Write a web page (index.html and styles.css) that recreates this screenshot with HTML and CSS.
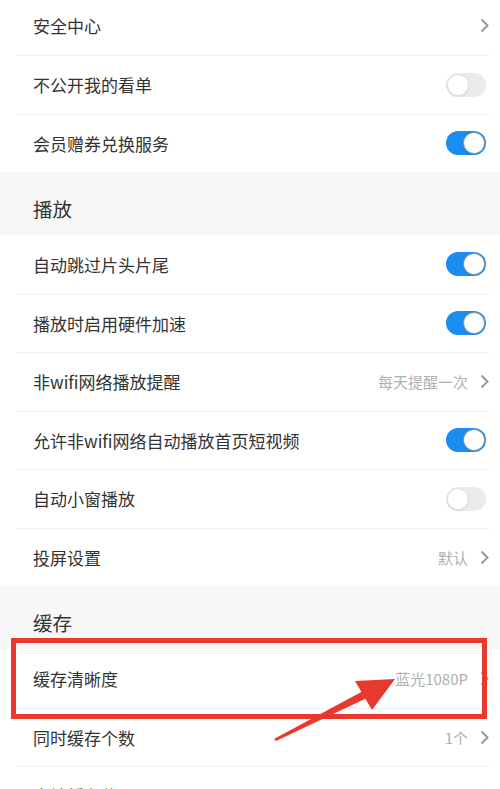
FILE: index.html
```html
<!DOCTYPE html>
<html lang="zh-CN">

<head>
    <meta charset="UTF-8">
    <meta name="viewport" content="width=device-width, initial-scale=1.0">
    <title>设置</title>
    <link rel="stylesheet" href="styles.css">
</head>

<body>
    <div class="page">
        <div class="group">
            <div class="row">
                <span class="label">安全中心</span>
                <span class="extra"><svg class="chev" viewBox="0 0 9 15"><polyline points="1.5,1.5 7.5,7.5 1.5,13.5"/></svg></span>
            </div>
            <div class="row">
                <span class="label">不公开我的看单</span>
                <span class="switch"></span>
            </div>
            <div class="row">
                <span class="label">会员赠券兑换服务</span>
                <span class="switch on"></span>
            </div>
        </div>

        <div class="section-title">播放</div>
        <div class="group">
            <div class="row">
                <span class="label">自动跳过片头片尾</span>
                <span class="switch on"></span>
            </div>
            <div class="row">
                <span class="label">播放时启用硬件加速</span>
                <span class="switch on"></span>
            </div>
            <div class="row">
                <span class="label">非wifi网络播放提醒</span>
                <span class="extra"><span class="value">每天提醒一次</span><svg class="chev" viewBox="0 0 9 15"><polyline points="1.5,1.5 7.5,7.5 1.5,13.5"/></svg></span>
            </div>
            <div class="row">
                <span class="label">允许非wifi网络自动播放首页短视频</span>
                <span class="switch on"></span>
            </div>
            <div class="row">
                <span class="label">自动小窗播放</span>
                <span class="switch"></span>
            </div>
            <div class="row">
                <span class="label">投屏设置</span>
                <span class="extra"><span class="value">默认</span><svg class="chev" viewBox="0 0 9 15"><polyline points="1.5,1.5 7.5,7.5 1.5,13.5"/></svg></span>
            </div>
        </div>

        <div class="section-title">缓存</div>
        <div class="group">
            <div class="row">
                <span class="label">缓存清晰度</span>
                <span class="extra"><span class="value">蓝光1080P</span><svg class="chev" viewBox="0 0 9 15"><polyline points="1.5,1.5 7.5,7.5 1.5,13.5"/></svg></span>
            </div>
            <div class="row">
                <span class="label">同时缓存个数</span>
                <span class="extra"><span class="value">1个</span><svg class="chev" viewBox="0 0 9 15"><polyline points="1.5,1.5 7.5,7.5 1.5,13.5"/></svg></span>
            </div>
            <div class="row">
                <span class="label">本地缓存位置</span>
                <span class="extra"><svg class="chev" viewBox="0 0 9 15"><polyline points="1.5,1.5 7.5,7.5 1.5,13.5"/></svg></span>
            </div>
        </div>
    </div>

    <!-- annotation drawn over the screenshot -->
    <div class="mark"></div>
    <svg class="arrow" viewBox="0 0 500 789">
        <polygon points="274,739 362.2,691.4 365.8,698.6 276,741"/>
        <polygon points="355,681 395,679 372,710"/>
    </svg>
</body>

</html>
```

FILE: styles.css
```css
body {
    margin: 0;
    background: #fff;
    font-family: "Noto Sans CJK SC", "Noto Sans", sans-serif;
    color: #333;
    overflow: hidden;
    height: 789px;
    position: relative;
}

.page {
    margin-top: -3.5px;
}

.group {
    background: #fff;
    padding: 0 11px 0 16px;
}

.row {
    height: 58.5px;
    box-sizing: border-box;
    display: flex;
    align-items: center;
    justify-content: space-between;
    padding-left: 17px;
    font-size: 17px;
}

.row + .row {
    border-top: 1px solid #efefef;
}

.extra {
    display: flex;
    align-items: center;
}

.value {
    font-size: 15px;
    color: #b0b0b0;
    margin-right: 12px;
}

.chev {
    width: 9px;
    height: 15px;
    fill: none;
    stroke: #9a9a9a;
    stroke-width: 2;
}

.switch {
    width: 40px;
    height: 24px;
    box-sizing: border-box;
    border-radius: 12px;
    background: #ebebeb;
    margin-right: 3px;
    display: flex;
    align-items: center;
    padding: 0 1px;
}

.switch::after {
    content: "";
    width: 22px;
    height: 22px;
    box-sizing: border-box;
    border-radius: 50%;
    background: #fff;
    border: 1px solid #e2e2e2;
    box-shadow: 0 1px 2px rgba(0, 0, 0, 0.08);
}

.switch.on {
    background: #1b8df0;
    justify-content: flex-end;
}

.switch.on::after {
    border-color: #8b9aa6;
}

.section-title {
    background: #f7f7f7;
    height: 63px;
    box-sizing: border-box;
    padding: 25px 0 0 33px;
    font-size: 19.5px;
    line-height: 24px;
}

.mark {
    position: absolute;
    left: 11px;
    top: 638px;
    width: 476px;
    height: 81px;
    box-sizing: border-box;
    border: 5px solid #e8392f;
}

.arrow {
    position: absolute;
    left: 0;
    top: 0;
    width: 500px;
    height: 789px;
    fill: #e8392f;
}
```
